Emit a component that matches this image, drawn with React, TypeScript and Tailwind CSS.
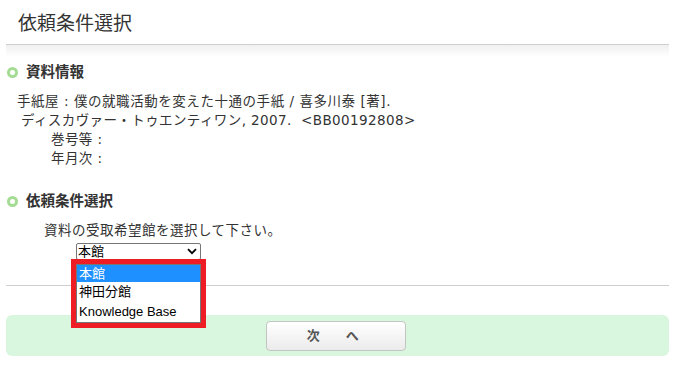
export default function App() {
  const font = {
    fontFamily: '"DejaVu Sans", "Noto Sans CJK JP", sans-serif',
  };
  return (
    <div className="w-[675px] h-[376px] bg-white text-[#333] px-[6px] relative" style={font}>
      {/* header */}
      <div className="h-[45px] border-b border-[#cfcfcf] pl-[12px] flex items-center pt-[2px]">
        <h1 className="text-[19px] leading-none">依頼条件選択</h1>
      </div>
      <div className="h-[12px] bg-gradient-to-b from-[#f0f0f0] to-white"></div>

      {/* 資料情報 */}
      <div className="mt-[5px] flex items-center gap-[8px] pl-[1px] h-[20px]">
        <span className="w-[11px] h-[11px] rounded-full border-[3px] border-[#a3dc92] bg-white"></span>
        <h2 className="text-[14.5px] font-bold leading-none">資料情報</h2>
      </div>
      <div className="mt-[10px] text-[13.5px] leading-[19px] pl-[11px] tracking-[0.4px]">
        <p className="tracking-[0.55px]">手紙屋 : 僕の就職活動を変えた十通の手紙 / 喜多川泰 [著].</p>
        <p className="pl-[4px]">ディスカヴァー・トゥエンティワン, 2007.&nbsp;&nbsp;&lt;BB00192808&gt;</p>
        <p className="pl-[34px]">巻号等 :</p>
        <p className="pl-[34px]">年月次 :</p>
      </div>

      {/* 依頼条件選択 */}
      <div className="mt-[23px] flex items-center gap-[8px] pl-[1px] h-[20px]">
        <span className="w-[11px] h-[11px] rounded-full border-[3px] border-[#a3dc92] bg-white"></span>
        <h2 className="text-[14.5px] font-bold leading-none">依頼条件選択</h2>
      </div>
      <p className="mt-[10px] pl-[38px] text-[13.5px] leading-[19px] tracking-[0.5px]">資料の受取希望館を選択して下さい。</p>
      <div className="mt-[3px] pl-[70px] relative" style={{ fontFamily: '"Liberation Sans", "Noto Sans CJK JP", sans-serif' }}>
        <div className="w-[125px] h-[17px] border border-[#767676] rounded-[2px] flex items-center justify-between pl-[1px] pr-[3px] text-[13px] leading-none text-black">
          <span>本館</span>
          <svg width="10" height="7" viewBox="0 0 10 7">
            <path d="M1 1.2 L5 5.2 L9 1.2" fill="none" stroke="#000" strokeWidth="1.8" />
          </svg>
        </div>
        {/* open dropdown list with red highlight */}
        <div className="absolute left-[65px] top-[16px] border-[5px] border-[#ee1c25] z-10">
          <div className="w-[125px] bg-white border border-[#767676] text-[13px] text-black leading-[20px]">
            <div className="bg-[#1e90ff] text-white pl-[2px] h-[17px] leading-[17px]">本館</div>
            <div className="pl-[2px]">神田分館</div>
            <div className="pl-[2px]">Knowledge Base</div>
          </div>
        </div>
      </div>

      <div className="mt-[25px] border-t border-[#cfcfcf]"></div>

      {/* button bar */}
      <div className="mt-[29px] h-[41px] bg-[#d9f6df] rounded-[6px] flex items-center pl-[260px]">
        <button className="w-[140px] h-[30px] rounded-[4px] border border-[#c4c4c4] bg-gradient-to-b from-white to-[#ebebeb] text-[13px] font-bold text-[#555] tracking-[0.5em]">
          次　へ
        </button>
      </div>
    </div>
  );
}
